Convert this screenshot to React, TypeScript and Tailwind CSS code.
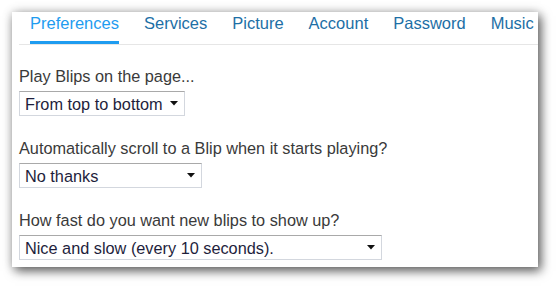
import React from "react";

const tabs = ["Preferences", "Services", "Picture", "Account", "Password", "Music"];

function FakeSelect({ value, width }: { value: string; width: string }) {
  return (
    <div
      className={`${width} mt-[5px] flex h-[25px] items-center justify-between border border-[#d3d7de] border-t-[#a9a9a9] bg-white pl-[5px] pr-[5px]`}
    >
      <span className="text-[16.3px] leading-[20px] text-[#1e1e3c]">{value}</span>
      <svg width="8" height="5" viewBox="0 0 8 5" className="mr-[1px]">
        <path d="M0 0h8L4 4.5z" fill="#111" />
      </svg>
    </div>
  );
}

export default function App() {
  return (
    <div className="min-h-[287px] bg-white p-[12px]" style={{ fontFamily: '"Liberation Sans", Arial, sans-serif' }}>
      <div className="h-[255px] w-[526px] overflow-hidden bg-white pl-[7px] shadow-[3px_4px_10px_rgba(0,0,0,0.6),0_0_10px_rgba(0,0,0,0.18)]">
        {/* tab strip */}
        <div className="flex gap-[25px] border-b border-[#e6e6e6] pl-[11px]">
          {tabs.map((t, i) => (
            <div
              key={t}
              className={
                i === 0
                  ? "border-b-[3px] border-[#1e9cf0] pb-[8px] pt-[1px] text-[16.5px] leading-[20px] text-[#1e9cf0]"
                  : "border-b-[3px] border-transparent pb-[8px] pt-[1px] text-[16.5px] leading-[20px] whitespace-nowrap text-[#1d6fa6]"
              }
            >
              {t}
            </div>
          ))}
        </div>

        <div className="pt-[21px]">
          <div className="mb-[22px]">
            <div className="text-[16.3px] leading-[20px] text-[#3a3a3a]">Play Blips on the page...</div>
            <FakeSelect value="From top to bottom" width="w-[166px]" />
          </div>
          <div className="mb-[22px]">
            <div className="text-[16.3px] leading-[20px] text-[#3a3a3a]">
              Automatically scroll to a Blip when it starts playing?
            </div>
            <FakeSelect value="No thanks" width="w-[183px]" />
          </div>
          <div>
            <div className="text-[16.3px] leading-[20px] text-[#3a3a3a]">How fast do you want new blips to show up?</div>
            <FakeSelect value="Nice and slow (every 10 seconds)." width="w-[363px]" />
          </div>
        </div>
      </div>
    </div>
  );
}
